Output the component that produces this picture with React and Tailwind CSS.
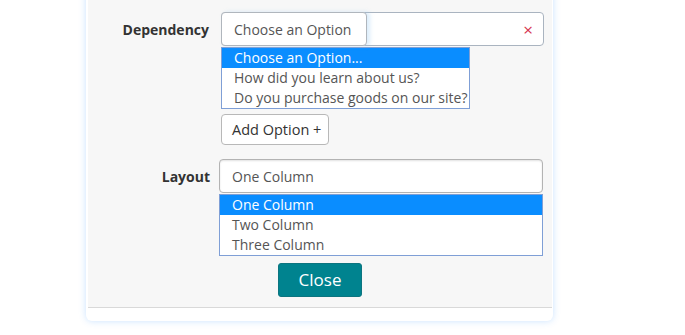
const depOptions = [
  "Choose an Option...",
  "How did you learn about us?",
  "Do you purchase goods on our site?",
];

const layoutOptions = ["One Column", "Two Column", "Three Column"];

function OptionList({ items, className }) {
  return (
    <div
      className={`border border-[#7f9fd6] bg-white text-[14px] leading-[20px] ${className}`}
    >
      {items.map((item, index) => (
        <div
          key={item}
          className={
            index === 0
              ? "bg-[#0a8dff] pl-[12px] text-white"
              : "pl-[12px] text-[#555]"
          }
        >
          {item}
        </div>
      ))}
    </div>
  );
}

export default function App() {
  return (
    <div
      className="h-[335px] w-[685px] overflow-hidden bg-white"
      style={{ fontFamily: '"Open Sans", "Liberation Sans", sans-serif' }}
    >
      <div className="-mt-[10px] ml-[86px] w-[467px] rounded-b-[6px] bg-white pb-[13px] shadow-[0_0_7px_rgba(60,150,255,0.28)]">
        <div className="ml-[2px] mr-px border-b border-[#d9d9d9] bg-[#f7f7f7] pb-[10px] pt-[22px]">
          {/* Dependency row */}
          <div className="flex items-start">
            <div className="flex h-[34px] w-[121px] items-center justify-end text-[14px] font-bold text-[#333]">
              Dependency
            </div>
            <div className="ml-[12px] w-[323px]">
              <div className="flex h-[34px] items-stretch rounded-[4px] border border-[#aab4c0] bg-white">
                <div className="-my-px -ml-px flex w-[146px] items-center rounded-[4px] border border-[#b0b6bd] bg-white pl-[12px] text-[14px] text-[#555] shadow-[3px_0_4px_rgba(150,200,240,0.35)]">
                  Choose an Option
                </div>
                <div className="flex flex-1 items-center justify-end pr-[10px] text-[17px] leading-none text-[#d6334f]">
                  ×
                </div>
              </div>
              <OptionList items={depOptions} className="mt-px w-[249px]" />
              <button className="mt-[5px] h-[31px] w-[108px] rounded-[4px] border border-[#b8b8b8] bg-white pl-[10px] text-left text-[14.5px] text-[#333]">
                Add Option +
              </button>
            </div>
          </div>

          {/* Layout row */}
          <div className="mt-[14px] flex items-start">
            <div className="flex h-[34px] w-[122px] items-center justify-end text-[14px] font-bold text-[#333]">
              Layout
            </div>
            <div className="ml-[9px] w-[324px]">
              <div className="flex h-[34px] items-center rounded-[4px] border border-[#b3b3b3] bg-white pl-[12px] text-[14px] text-[#555] shadow-[inset_0_1px_2px_rgba(0,0,0,0.12)]">
                One Column
              </div>
              <OptionList items={layoutOptions} className="mt-px" />
            </div>
          </div>

          <div className="mt-[7px] flex pl-[190px]">
            <button className="h-[34px] w-[84px] rounded-[3px] border border-[#0d7580] bg-[#00838f] text-[17px] text-white">
              Close
            </button>
          </div>
        </div>
      </div>
    </div>
  );
}
